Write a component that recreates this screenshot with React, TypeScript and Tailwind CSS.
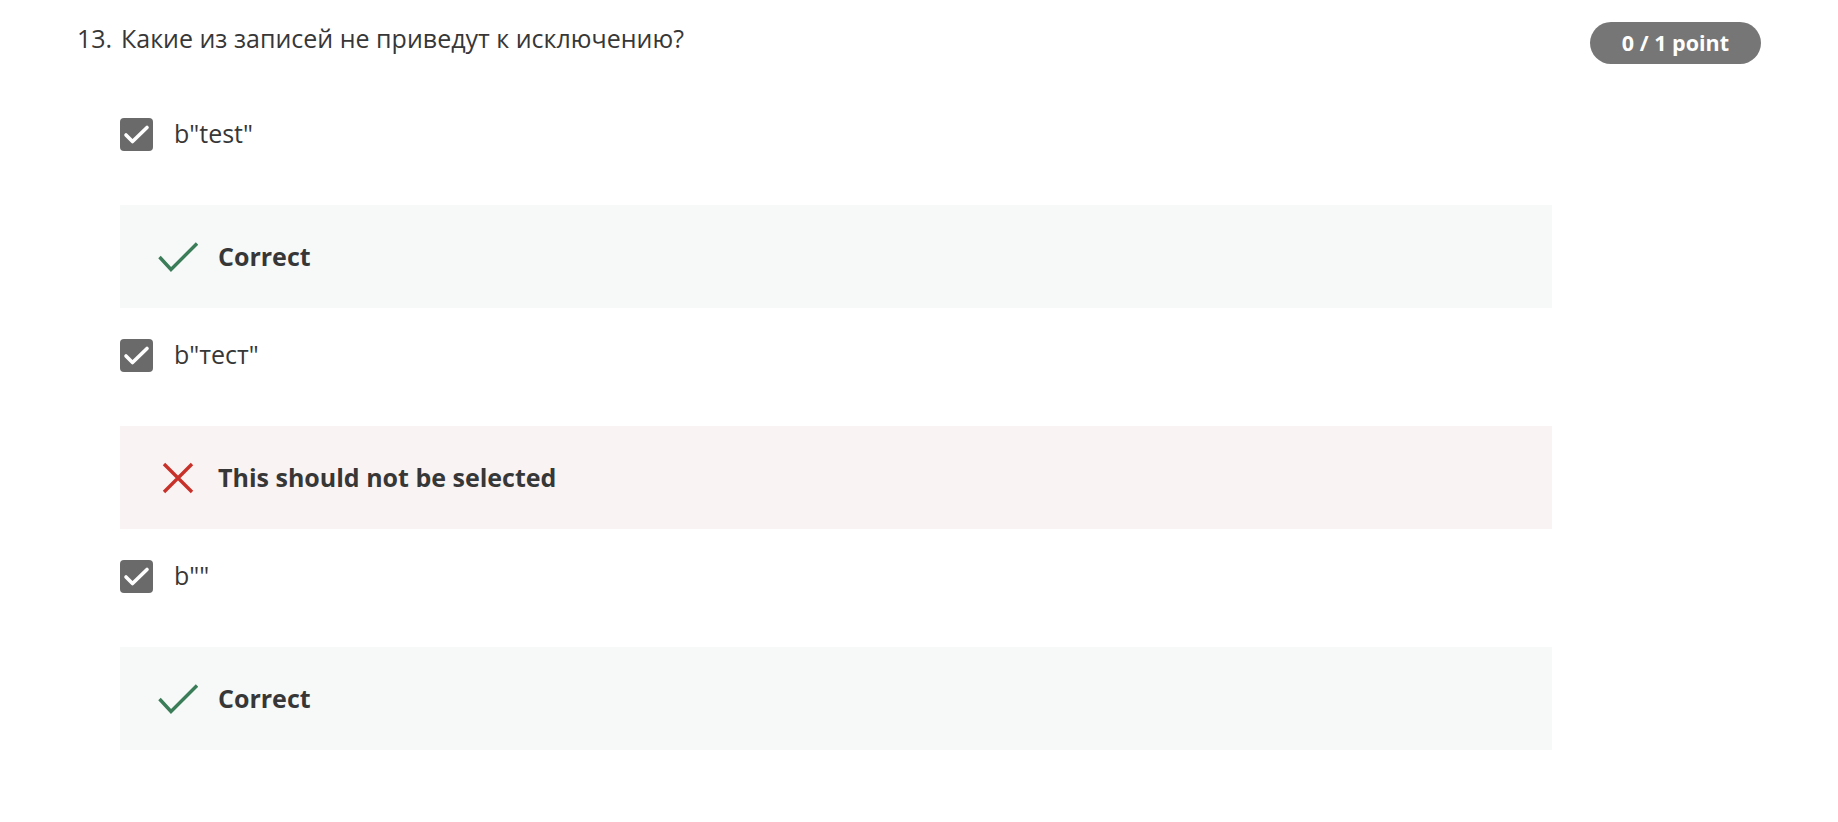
import React from 'react';

type Option = {
  label: string;
  correct: boolean;
};

const options: Option[] = [
  { label: 'b"test"', correct: true },
  { label: 'b"тест"', correct: false },
  { label: 'b""', correct: true },
];

function CheckedBox() {
  return (
    <div className="flex h-[33px] w-[33px] shrink-0 items-center justify-center rounded-[4px] bg-[#6a6a6a]">
      <svg width="33" height="33" viewBox="0 0 33 33" fill="none">
        <polyline
          points="6,17 12.5,23.5 27,9.5"
          stroke="#fff"
          strokeWidth="3.6"
          strokeLinecap="round"
          strokeLinejoin="round"
        />
      </svg>
    </div>
  );
}

function Feedback({ correct }: { correct: boolean }) {
  return (
    <div
      className={
        correct
          ? 'mt-[54px] flex h-[103px] items-center bg-[#f7f9f8] pl-[38px]'
          : 'mt-[54px] flex h-[103px] items-center bg-[#faf3f3] pl-[38px]'
      }
    >
      <div className="flex w-[40px] shrink-0 items-center justify-center">
        {correct ? (
          <svg width="40" height="30" viewBox="0 0 40 30" fill="none">
            <polyline
              points="1.5,15 13,27.5 39,1.5"
              stroke="#3b7d58"
              strokeWidth="3.4"
              strokeLinejoin="miter"
            />
          </svg>
        ) : (
          <svg width="32" height="32" viewBox="0 0 32 32" fill="none">
            <path d="M2 2 L30 30 M30 2 L2 30" stroke="#c8302a" strokeWidth="3.4" />
          </svg>
        )}
      </div>
      <span className="mb-[2px] ml-[20px] text-[25px] font-bold leading-[32px] text-[#373737]">
        {correct ? 'Correct' : 'This should not be selected'}
      </span>
    </div>
  );
}

export default function App() {
  return (
    <main className="min-h-screen bg-white px-[77px] pt-[22px] font-['Open_Sans',sans-serif] text-[#373737]">
      <div className="flex items-start justify-between">
        <div className="flex text-[25px] leading-[32px]">
          <span className="w-[44px] shrink-0">13.</span>
          <span>Какие из записей не приведут к исключению?</span>
        </div>
        <div className="flex h-[42px] items-center rounded-full bg-[#767676] px-[32px] text-[21.5px] font-bold text-white">
          0 / 1 point
        </div>
      </div>

      <div className="ml-[43px] mt-[54px] w-[1432px]">
        {options.map((opt, i) => (
          <div key={i} className={i === 0 ? '' : 'mt-[31px]'}>
            <div className="flex h-[33px] items-center">
              <CheckedBox />
              <span className="mb-[4px] ml-[21px] text-[25px] leading-[32px]">{opt.label}</span>
            </div>
            <Feedback correct={opt.correct} />
          </div>
        ))}
      </div>
    </main>
  );
}
